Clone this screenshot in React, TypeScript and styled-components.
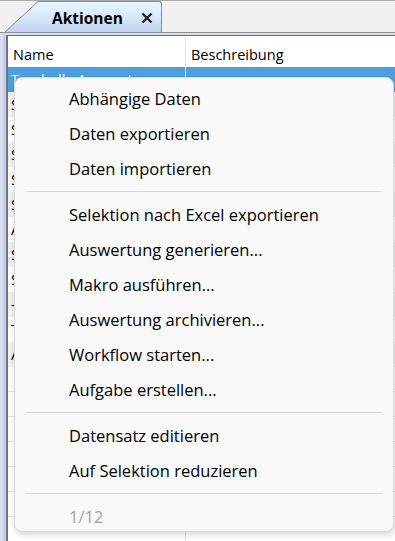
import styled, { createGlobalStyle } from 'styled-components';

const GlobalStyle = createGlobalStyle`
  html, body {
    margin: 0;
    padding: 0;
    background: #f0f0f0;
    font-family: "Open Sans", "Noto Sans", sans-serif;
  }
`;

const Page = styled.div`
  position: relative;
  width: 395px;
  height: 541px;
  overflow: hidden;
  display: flex;
  flex-direction: column;
  background: #f0f0f0;
`;

const TabStrip = styled.div`
  height: 33px;
  border-top: 1px solid #a9a9a9;
  border-bottom: 1px solid #8e8e8e;
  display: flex;
  align-items: flex-end;
  padding-left: 5px;
  box-sizing: content-box;
`;

const Tab = styled.div`
  display: flex;
  height: 31px;
`;

const TabBody = styled.div`
  width: 124px;
  height: 31px;
  box-sizing: border-box;
  border-top: 1px solid #8c8c8c;
  border-right: 1px solid #8c8c8c;
  border-top-right-radius: 3px;
  background: linear-gradient(#e9f8ff 0%, #d5e6fa 55%, #c3d3f1 100%);
  display: flex;
  align-items: center;
  padding: 2px 0 0 14px;
  gap: 18px;
`;

const TabTitle = styled.span`
  font-weight: 700;
  font-size: 15.5px;
  color: #000;
`;

const CloseMark = styled.span`
  display: flex;
  align-items: center;
`;

const Frame = styled.div`
  flex: 1;
  display: flex;
  padding: 2px 0 0 3px;
  background: #d9ddf2;
`;

const FrameInner = styled.div`
  flex: 1;
  display: flex;
  border-left: 3px solid #c6cce8;
`;

const Grid = styled.div`
  flex: 1;
  border-top: 1px solid #6c6c78;
  border-left: 2px solid #727282;
  background: #fff;
  display: flex;
  flex-direction: column;
`;

const Row = styled.div<{ $h?: number; $bg?: string; $line?: boolean }>`
  display: grid;
  grid-template-columns: 178px 1fr;
  height: ${p => p.$h ?? 25}px;
  background: ${p => p.$bg ?? '#fff'};
  box-sizing: border-box;
  border-bottom: ${p => (p.$line ? '1px solid #e4e4e4' : 'none')};
  flex-shrink: 0;
`;

const Cell = styled.div<{ $color?: string; $divider?: boolean; $head?: boolean }>`
  display: flex;
  align-items: center;
  padding-left: ${p => (p.$head ? 5 : 3)}px;
  padding-top: ${p => (p.$head ? 5 : 0)}px;
  font-size: 14.5px;
  color: ${p => p.$color ?? '#000'};
  white-space: nowrap;
  overflow: hidden;
  border-right: ${p => (p.$divider ? '1px solid #e3e3e3' : 'none')};
`;

const Menu = styled.div`
  position: absolute;
  left: 14px;
  top: 77px;
  width: 380px;
  box-sizing: border-box;
  background: #f9f9f9;
  border: 1px solid #dadada;
  border-radius: 8px;
  box-shadow: 1px 3px 6px rgba(0, 0, 0, 0.16);
  padding-top: 3px;
  display: flex;
  flex-direction: column;
`;

const MenuItem = styled.div<{ $disabled?: boolean }>`
  height: ${p => (p.$disabled ? 32 : 35)}px;
  box-sizing: border-box;
  padding-top: ${p => (p.$disabled ? 3 : 0)}px;
  flex-shrink: 0;
  display: flex;
  align-items: center;
  padding-left: 54px;
  font-size: 16.5px;
  color: ${p => (p.$disabled ? '#a2a2a2' : '#000')};
`;

const Separator = styled.div`
  height: 1px;
  flex-shrink: 0;
  margin: 5px 11px 5px 11px;
  background: #d6d6d6;
`;

const rows = [
  'Saldenliste Sachkonten',
  'Saldenliste Kreditoren',
  'Saldenliste Debitoren',
  'Summen und Salden',
  'Stammdaten Artikel',
  'Auftragsübersicht',
  'Stammdaten Kunden',
  'Stammdaten Lieferanten',
  '– Lagerbestand',
  'Tagesabschluss',
  'Auswertung Umsatz',
];

const menu: (string | null)[] = [
  'Abhängige Daten',
  'Daten exportieren',
  'Daten importieren',
  null,
  'Selektion nach Excel exportieren',
  'Auswertung generieren...',
  'Makro ausführen...',
  'Auswertung archivieren...',
  'Workflow starten...',
  'Aufgabe erstellen...',
  null,
  'Datensatz editieren',
  'Auf Selektion reduzieren',
  null,
];

const TabSlant = () => (
  <svg width="33" height="31" viewBox="0 0 33 31">
    <defs>
      <linearGradient id="tabg" x1="0" y1="0" x2="0" y2="1">
        <stop offset="0" stopColor="#e9f8ff" />
        <stop offset="0.55" stopColor="#d5e6fa" />
        <stop offset="1" stopColor="#c3d3f1" />
      </linearGradient>
    </defs>
    <polygon points="0,31 33,0.5 33,31" fill="url(#tabg)" />
    <line x1="0" y1="31" x2="33" y2="0.5" stroke="#8c8c8c" strokeWidth="1" />
  </svg>
);

export default function App() {
  const empty = 7;
  return (
    <>
      <GlobalStyle />
      <Page>
        <TabStrip>
          <Tab>
            <TabSlant />
            <TabBody>
              <TabTitle>Aktionen</TabTitle>
              <CloseMark>
                <svg width="12" height="12" viewBox="0 0 12 12">
                  <path d="M1.5 1.5 L10.5 10.5 M10.5 1.5 L1.5 10.5" stroke="#1a1a1a" strokeWidth="2.3" />
                </svg>
              </CloseMark>
            </TabBody>
          </Tab>
        </TabStrip>
        <Frame>
          <FrameInner>
            <Grid>
              <Row $h={31}>
                <Cell $divider $head>Name</Cell>
                <Cell $head>Beschreibung</Cell>
              </Row>
              <Row $bg="#4c9fe1">
                <Cell $divider $color="#fff">Tarabelle Auswertung</Cell>
                <Cell $color="#fff"></Cell>
              </Row>
              {rows.map((r, i) => (
                <Row key={r} $bg={i % 2 === 0 ? '#f1f1f1' : '#fff'}>
                  <Cell $divider>{r}</Cell>
                  <Cell></Cell>
                </Row>
              ))}
              {Array.from({ length: empty }).map((_, i) => (
                <Row key={'e' + i} $line>
                  <Cell $divider></Cell>
                  <Cell></Cell>
                </Row>
              ))}
            </Grid>
          </FrameInner>
        </Frame>
        <Menu>
          {menu.map((m, i) =>
            m === null ? <Separator key={i} /> : <MenuItem key={i}>{m}</MenuItem>
          )}
          <MenuItem $disabled>1/12</MenuItem>
        </Menu>
      </Page>
    </>
  );
}
